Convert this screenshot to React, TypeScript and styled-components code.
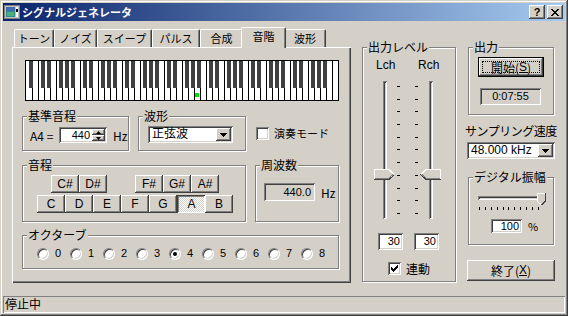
import React from "react";
import styled, { createGlobalStyle, css } from "styled-components";

const GlobalStyle = createGlobalStyle`
  * { box-sizing: border-box; }
  html, body { margin: 0; padding: 0; background: #d4d0c8; }
  body {
    font-family: "Noto Sans CJK JP", "Liberation Sans", sans-serif;
    font-size: 11px;
    line-height: 13px;
    color: #000;
  }
`;

const raised = css`
  background: #d4d0c8;
  box-shadow: inset -1px -1px #404040, inset 1px 1px #fff, inset -2px -2px #808080,
    inset 2px 2px #d4d0c8;
`;

const sunken = css`
  box-shadow: inset 1px 1px #808080, inset -1px -1px #fff, inset 2px 2px #404040,
    inset -2px -2px #d4d0c8;
`;

const Window = styled.div`
  width: 568px;
  height: 316px;
  padding: 3px;
  background: #d4d0c8;
  box-shadow: inset -1px -1px #404040, inset 1px 1px #d4d0c8, inset -2px -2px #808080,
    inset 2px 2px #fff;
  display: flex;
  flex-direction: column;
`;

const TitleBar = styled.div`
  height: 18px;
  padding: 0 2px 0 1px;
  display: flex;
  align-items: center;
  background: linear-gradient(to right, #0a246a, #a6caf0);
`;

const TitleText = styled.span`
  margin-left: 2px;
  flex: 1;
  color: #fff;
  font-weight: bold;
  font-size: 11px;
`;

const TitleButton = styled.div`
  ${raised};
  width: 16px;
  height: 14px;
  margin-left: 2px;
  display: flex;
  align-items: center;
  justify-content: center;
  font-family: "Liberation Sans", sans-serif;
  font-weight: bold;
  font-size: 11px;
`;

const MainRow = styled.div`
  height: 275px;
  padding: 6px 0 0 9px;
  display: flex;
  align-items: flex-start;
`;

const LeftCol = styled.div`
  width: 339px;
  display: flex;
  flex-direction: column;
`;

const TabStrip = styled.div`
  height: 20px;
  padding-left: 2px;
  display: flex;
  align-items: flex-end;
`;

const Tab = styled.div<{ $w: number; $active?: boolean }>`
  width: ${(p) => p.$w}px;
  height: 18px;
  background: #d4d0c8;
  border-top: 1px solid #fff;
  border-left: 1px solid #fff;
  border-right: 1px solid #404040;
  border-radius: 2px 2px 0 0;
  box-shadow: inset -1px 0 #808080;
  text-align: center;
  line-height: 16px;
  ${(p) =>
    p.$active &&
    css`
      width: ${p.$w + 4}px;
      height: 21px;
      margin: 0 -2px -1px;
      line-height: 17px;
      position: relative;
      z-index: 1;
    `}
`;

const Panel = styled.div`
  width: 339px;
  height: 236px;
  padding: 13px 0 0 10px;
  box-shadow: inset 1px 1px #fff, inset -1px -1px #404040, inset -2px -2px #808080;
`;

const KeyboardWrap = styled.div`
  margin-left: 3px;
  height: 41px;
`;

const Row = styled.div<{ $mt: number }>`
  display: flex;
  align-items: flex-start;
  margin-top: ${(p) => p.$mt}px;
`;

const Group = styled.div<{ $w: number; $h: number; $ml?: number; $pad: string }>`
  position: relative;
  width: ${(p) => p.$w}px;
  height: ${(p) => p.$h}px;
  margin-left: ${(p) => p.$ml ?? 0}px;
  padding: ${(p) => p.$pad};
  border: 1px solid #808080;
  box-shadow: inset 1px 1px #fff, 1px 1px #fff;
`;

const Legend = styled.span`
  position: absolute;
  top: -8px;
  left: 4px;
  padding: 0 1px;
  background: #d4d0c8;
  font-size: 12px;
  line-height: 14px;
`;

const Line = styled.div<{ $mt?: number; $ml?: number }>`
  display: flex;
  align-items: center;
  margin-top: ${(p) => p.$mt ?? 0}px;
  margin-left: ${(p) => p.$ml ?? 0}px;
`;

const Caption = styled.span<{ $w?: number; $ml?: number }>`
  display: inline-block;
  width: ${(p) => (p.$w ? `${p.$w}px` : "auto")};
  margin-left: ${(p) => p.$ml ?? 0}px;
  white-space: nowrap;
`;

const ChannelLabels = styled(Line)`
  font-family: "Liberation Sans", sans-serif;
  font-size: 12px;
  line-height: 14px;
`;

const Field = styled.div<{ $w: number; $h: number; $grey?: boolean; $align?: string }>`
  ${sunken};
  width: ${(p) => p.$w}px;
  height: ${(p) => p.$h}px;
  background: ${(p) => (p.$grey ? "#d4d0c8" : "#fff")};
  padding: 0 ${(p) => (p.$grey ? 4 : 3)}px;
  display: flex;
  align-items: center;
  justify-content: ${(p) => p.$align ?? "flex-end"};
  font-family: "Liberation Sans", "Noto Sans CJK JP", sans-serif;
  font-size: 11px;
  flex-shrink: 0;
`;

const SpinBox = styled.div`
  ${sunken};
  width: 48px;
  height: 16px;
  background: #fff;
  padding: 2px;
  display: flex;
  font-family: "Liberation Sans", sans-serif;
`;

const SpinValue = styled.div`
  flex: 1;
  text-align: right;
  padding-right: 2px;
  line-height: 12px;
`;

const SpinButtons = styled.div`
  width: 13px;
  display: flex;
  flex-direction: column;
`;

const SpinButton = styled.div`
  ${raised};
  flex: 1;
  display: flex;
  align-items: center;
  justify-content: center;
`;

const Combo = styled.div<{ $w: number }>`
  ${sunken};
  width: ${(p) => p.$w}px;
  height: 17px;
  background: #fff;
  padding: 2px;
  display: flex;
  align-items: center;
`;

const ComboText = styled.div`
  flex: 1;
  padding-left: 2px;
  font-family: "Liberation Sans", "Noto Sans CJK JP", sans-serif;
  font-size: 12px;
`;

const DropButton = styled.div`
  ${raised};
  width: 15px;
  height: 13px;
  display: flex;
  align-items: center;
  justify-content: center;
`;

const CheckBox = styled.div`
  ${sunken};
  width: 13px;
  height: 13px;
  background: #fff;
  display: flex;
  align-items: center;
  justify-content: center;
  flex-shrink: 0;
`;

const PitchRow = styled.div<{ $ml: number; $mt: number }>`
  display: flex;
  margin-left: ${(p) => p.$ml}px;
  margin-top: ${(p) => p.$mt}px;
`;

const PitchButton = styled.div<{ $pressed?: boolean; $ghost?: boolean }>`
  ${raised};
  width: 28px;
  height: 18px;
  display: flex;
  align-items: center;
  justify-content: center;
  font-family: "Liberation Sans", sans-serif;
  font-size: 12px;
  visibility: ${(p) => (p.$ghost ? "hidden" : "visible")};
  ${(p) =>
    p.$pressed &&
    css`
      background: repeating-conic-gradient(#fff 0 25%, #d4d0c8 0 50%) 0 0 / 2px 2px;
      box-shadow: inset 1px 1px #404040, inset -1px -1px #fff, inset 2px 2px #808080;
      padding: 1px 0 0 1px;
    `}
`;

const RadioItem = styled.div`
  width: 33px;
  display: flex;
  align-items: center;
`;

const RadioCircle = styled.div`
  width: 12px;
  height: 12px;
  border-radius: 50%;
  background: #fff;
  border: 1px solid;
  border-color: #808080 #fff #fff #808080;
  box-shadow: inset 1px 1px #404040, inset -1px -1px #d4d0c8;
  display: flex;
  align-items: center;
  justify-content: center;
`;

const RadioDot = styled.div`
  width: 4px;
  height: 4px;
  border-radius: 50%;
  background: #000;
`;

const RadioLabel = styled.span`
  margin-left: 6px;
  font-family: "Liberation Sans", sans-serif;
  font-size: 11px;
`;

const SideGroupWrap = styled.div<{ $ml: number }>`
  margin: 20px 0 0 ${(p) => p.$ml}px;
`;

const SliderRow = styled.div`
  height: 138px;
  margin-top: 9px;
  padding-left: 11px;
  display: flex;
`;

const VSlider = styled.div`
  position: relative;
  width: 21px;
  height: 100%;
  display: flex;
  justify-content: center;
`;

const VTrack = styled.div`
  width: 4px;
  height: 100%;
  box-shadow: inset 1px 1px #808080, inset -1px -1px #fff, inset 2px 2px #404040,
    inset -2px -2px #d4d0c8;
`;

const Thumb = styled.svg`
  position: absolute;
  left: 0;
  display: block;
`;

const TickCol = styled.div<{ $ml: number }>`
  width: 3px;
  height: 100%;
  margin-left: ${(p) => p.$ml}px;
  padding: 5px 0;
  display: flex;
  flex-direction: column;
  justify-content: space-between;
`;

const VTick = styled.div`
  width: 3px;
  height: 1px;
  background: #000;
`;

const RightCol = styled.div`
  width: 88px;
  margin: 20px 0 0 11px;
  display: flex;
  flex-direction: column;
`;

const PushButton = styled.div<{ $w: number; $h: number; $ml?: number; $mt?: number; $focus?: boolean }>`
  ${raised};
  position: relative;
  width: ${(p) => p.$w}px;
  height: ${(p) => p.$h}px;
  margin: ${(p) => p.$mt ?? 0}px 0 0 ${(p) => p.$ml ?? 0}px;
  display: flex;
  align-items: center;
  justify-content: center;
  font-size: 12px;
  ${(p) =>
    p.$focus &&
    css`
      box-shadow: inset 1px 1px #000, inset -1px -1px #000, inset -2px -2px #404040,
        inset 2px 2px #fff, inset -3px -3px #808080;
      &::after {
        content: "";
        position: absolute;
        inset: 4px;
        border: 1px dotted #000;
      }
    `}
`;

const Mnemonic = styled.span`
  text-decoration: underline;
  font-family: "Liberation Sans", sans-serif;
`;

const SideLabel = styled.div`
  margin: 9px 0 0 -2px;
  height: 13px;
  font-size: 12px;
  white-space: nowrap;
  letter-spacing: -0.5px;
`;

const HSlider = styled.div`
  position: relative;
  width: 64px;
  height: 17px;
  margin: 15px 0 0 9px;
  display: flex;
  flex-direction: column;
`;

const HTrack = styled.div`
  width: 62px;
  height: 4px;
  margin-top: 3px;
  box-shadow: inset 1px 1px #808080, inset -1px -1px #fff, inset 2px 2px #404040,
    inset -2px -2px #d4d0c8;
`;

const HTicks = styled.div`
  width: 62px;
  margin-top: 7px;
  padding: 0 1px;
  display: flex;
  justify-content: space-between;
`;

const HTick = styled.div`
  width: 1px;
  height: 3px;
  background: #000;
`;

const StatusBar = styled.div`
  height: 17px;
  margin-top: 0;
  padding-left: 2px;
  line-height: 16px;
  font-size: 12px;
  box-shadow: inset 1px 1px #808080, inset -1px -1px #fff;
`;

const Keyboard: React.FC<{ marked: number }> = ({ marked }) => {
  const names = ["A", "B", "C", "D", "E", "F", "G"];
  const whites = 52;
  const lines = [];
  const blacks = [];
  for (let i = 1; i < whites; i++) {
    lines.push(<rect key={`l${i}`} x={1 + i * 6} y={1} width={1} height={39} fill="#000" />);
  }
  for (let i = 0; i < whites - 1; i++) {
    const n = names[i % 7];
    if (n === "B" || n === "E") continue;
    const b = 1 + (i + 1) * 6;
    blacks.push(<rect key={`b${i}`} x={b - 3} y={1} width={4} height={27} fill="#404040" />);
  }
  return (
    <svg width={314} height={41} style={{ display: "block" }} shapeRendering="crispEdges">
      <rect x={0} y={0} width={314} height={41} fill="#000" />
      <rect x={1} y={1} width={312} height={39} fill="#fff" />
      {lines}
      {blacks}
      <rect x={2 + marked * 6} y={33} width={4} height={4} fill="#00e000" />
    </svg>
  );
};

const ThumbShape: React.FC<{ flip?: boolean; top: number }> = ({ flip, top }) => (
  <Thumb width={21} height={11} viewBox="0 0 21 11" style={{ top }} shapeRendering="crispEdges">
    <g transform={flip ? "translate(21 0) scale(-1 1)" : undefined}>
      <polygon points="0,0 15,0 20,5 20,6 15,11 0,11" fill="#d4d0c8" />
      <polyline points="0.5,10.5 0.5,0.5 15,0.5 19.5,5" fill="none" stroke="#fff" />
      <polyline points="0,10.5 15,10.5 20.5,5.5" fill="none" stroke="#404040" />
      <polyline points="1,9.5 14.5,9.5 19,5.5" fill="none" stroke="#808080" />
    </g>
  </Thumb>
);

const DownTriangle: React.FC = () => (
  <svg width={7} height={4} viewBox="0 0 7 4" shapeRendering="crispEdges">
    <polygon points="0,0 7,0 3.5,4" fill="#000" />
  </svg>
);

const SpinArrow: React.FC<{ up?: boolean }> = ({ up }) => (
  <svg width={5} height={3} viewBox="0 0 5 3">
    <polygon points={up ? "2.5,0 5,3 0,3" : "0,0 5,0 2.5,3"} fill="#000" />
  </svg>
);

const CheckMark: React.FC = () => (
  <svg width={9} height={9} viewBox="0 0 9 9" shapeRendering="crispEdges">
    <path
      d="M1 3h1v1h1v1h1V4h1V3h1V2h1V1h1v3H7v1H6v1H5v1H4v1H3V7H2V6H1z"
      fill="#000"
    />
  </svg>
);

const AppIcon: React.FC = () => (
  <svg width={16} height={16} viewBox="0 0 16 16" shapeRendering="crispEdges">
    <rect x={0} y={1} width={16} height={14} fill="#808080" />
    <rect x={1} y={2} width={14} height={12} fill="#c0c0c0" />
    <rect x={2} y={3} width={9} height={10} fill="#2e8b8b" />
    <rect x={2} y={3} width={9} height={4} fill="#3f6fb0" />
    <rect x={3} y={8} width={7} height={4} fill="#4caf7a" />
    <rect x={12} y={3} width={2} height={10} fill="#fff" />
    <rect x={12} y={5} width={2} height={3} fill="#000" />
  </svg>
);

const CloseGlyph: React.FC = () => (
  <svg width={8} height={7} viewBox="0 0 8 7" shapeRendering="crispEdges">
    <path d="M0 0h2v1h1v1h2V1h1V0h2v1H7v1H6v1H5v1h1v1h1v1h1v1H6V6H5V5H3v1H2v1H0V6h1V5h1V4h1V3H2V2H1V1H0z" fill="#000" />
  </svg>
);

const tabs = [
  { label: "トーン", w: 40 },
  { label: "ノイズ", w: 43 },
  { label: "スイープ", w: 55 },
  { label: "パルス", w: 48 },
  { label: "合成", w: 43 },
  { label: "音階", w: 41, active: true },
  { label: "波形", w: 42 },
];

const sharps = ["C#", "D#", "", "F#", "G#", "A#"];
const naturals = ["C", "D", "E", "F", "G", "A", "B"];
const octaves = [0, 1, 2, 3, 4, 5, 6, 7, 8];

const levelTop = (v: number) => Math.round(5 + ((100 - v) / 100) * 127 - 6);

export default function App() {
  const level = 30;
  return (
    <>
      <GlobalStyle />
      <Window>
        <TitleBar>
          <AppIcon />
          <TitleText>シグナルジェネレータ</TitleText>
          <TitleButton>?</TitleButton>
          <TitleButton>
            <CloseGlyph />
          </TitleButton>
        </TitleBar>

        <MainRow>
          <LeftCol>
            <TabStrip>
              {tabs.map((t) => (
                <Tab key={t.label} $w={t.w} $active={t.active}>
                  {t.label}
                </Tab>
              ))}
            </TabStrip>
            <Panel>
              <KeyboardWrap>
                <Keyboard marked={28} />
              </KeyboardWrap>

              <Row $mt={15}>
                <Group $w={107} $h={35} $pad="10px 0 0 7px">
                  <Legend>基準音程</Legend>
                  <Line>
                    <Caption $w={29} style={{ fontSize: 12 }}>
                      A4 =
                    </Caption>
                    <SpinBox>
                      <SpinValue>440</SpinValue>
                      <SpinButtons>
                        <SpinButton>
                          <SpinArrow up />
                        </SpinButton>
                        <SpinButton>
                          <SpinArrow />
                        </SpinButton>
                      </SpinButtons>
                    </SpinBox>
                    <Caption $ml={6} style={{ fontSize: 12 }}>
                      Hz
                    </Caption>
                  </Line>
                </Group>
                <Group $w={108} $h={35} $ml={9} $pad="9px 0 0 9px">
                  <Legend>波形</Legend>
                  <Combo $w={85}>
                    <ComboText>正弦波</ComboText>
                    <DropButton>
                      <DownTriangle />
                    </DropButton>
                  </Combo>
                </Group>
                <Line $mt={11} $ml={10}>
                  <CheckBox />
                  <Caption $ml={5}>演奏モード</Caption>
                </Line>
              </Row>

              <Row $mt={14}>
                <Group $w={224} $h={57} $pad="0">
                  <Legend>音程</Legend>
                  <PitchRow $ml={28} $mt={9}>
                    {sharps.map((s, i) => (
                      <PitchButton key={i} $ghost={!s}>
                        {s}
                      </PitchButton>
                    ))}
                  </PitchRow>
                  <PitchRow $ml={14} $mt={2}>
                    {naturals.map((n) => (
                      <PitchButton key={n} $pressed={n === "A"}>
                        {n}
                      </PitchButton>
                    ))}
                  </PitchRow>
                </Group>
                <Group $w={84} $h={57} $ml={9} $pad="17px 0 0 8px">
                  <Legend>周波数</Legend>
                  <Line>
                    <Field $w={51} $h={18} $grey>
                      440.0
                    </Field>
                    <Caption $ml={6} style={{ fontSize: 12 }}>
                      Hz
                    </Caption>
                  </Line>
                </Group>
              </Row>

              <Row $mt={13}>
                <Group $w={317} $h={34} $pad="11px 0 0 14px">
                  <Legend>オクターブ</Legend>
                  <Line>
                    {octaves.map((o) => (
                      <RadioItem key={o}>
                        <RadioCircle>{o === 4 && <RadioDot />}</RadioCircle>
                        <RadioLabel>{o}</RadioLabel>
                      </RadioItem>
                    ))}
                  </Line>
                </Group>
              </Row>
            </Panel>
          </LeftCol>

          <SideGroupWrap $ml={11}>
            <Group $w={94} $h={235} $pad="10px 0 0 0">
              <Legend>出力レベル</Legend>
              <ChannelLabels $ml={13}>
                <Caption $w={42}>Lch</Caption>
                <Caption>Rch</Caption>
              </ChannelLabels>
              <SliderRow>
                <VSlider>
                  <VTrack />
                  <ThumbShape top={levelTop(level)} />
                </VSlider>
                <TickCol $ml={2}>
                  {Array.from({ length: 11 }, (_, i) => (
                    <VTick key={i} />
                  ))}
                </TickCol>
                <TickCol $ml={15}>
                  {Array.from({ length: 11 }, (_, i) => (
                    <VTick key={i} />
                  ))}
                </TickCol>
                <VSlider style={{ marginLeft: 2 }}>
                  <VTrack />
                  <ThumbShape flip top={levelTop(level)} />
                </VSlider>
              </SliderRow>
              <Line $mt={14} $ml={15}>
                <Field $w={25} $h={17}>
                  30
                </Field>
                <Field $w={25} $h={17} style={{ marginLeft: 11 }}>
                  30
                </Field>
              </Line>
              <Line $mt={12} $ml={25}>
                <CheckBox>
                  <CheckMark />
                </CheckBox>
                <Caption $ml={5} style={{ fontSize: 12 }}>
                  連動
                </Caption>
              </Line>
            </Group>
          </SideGroupWrap>

          <RightCol>
            <Group $w={86} $h={68} $ml={1} $pad="9px 0 0 9px">
              <Legend>出力</Legend>
              <PushButton $w={66} $h={20} $focus>
                開始(<Mnemonic>S</Mnemonic>)
              </PushButton>
              <Field $w={61} $h={17} $grey $align="center" style={{ marginTop: 11, marginLeft: 2 }}>
                0:07:55
              </Field>
            </Group>
            <SideLabel>サンプリング速度</SideLabel>
            <Combo $w={88} style={{ marginTop: 5 }}>
              <ComboText>48.000 kHz</ComboText>
              <DropButton>
                <DownTriangle />
              </DropButton>
            </Combo>
            <Group $w={86} $h={68} $ml={1} $pad="0" style={{ marginTop: 18 }}>
              <Legend>デジタル振幅</Legend>
              <HSlider>
                <HTrack />
                <HTicks>
                  {Array.from({ length: 11 }, (_, i) => (
                    <HTick key={i} />
                  ))}
                </HTicks>
                <svg
                  width={9}
                  height={12}
                  viewBox="0 0 9 12"
                  shapeRendering="crispEdges"
                  style={{ position: "absolute", left: 59, top: 0 }}
                >
                  <polygon points="0,0 8,0 8,8 4,12 0,8" fill="#d4d0c8" />
                  <polyline points="0.5,8 0.5,0.5 8,0.5" fill="none" stroke="#fff" />
                  <polyline points="8.5,0 8.5,8 4.5,12" fill="none" stroke="#404040" />
                  <polyline points="0.5,8.5 4,11.5" fill="none" stroke="#fff" />
                </svg>
              </HSlider>
              <Line $mt={9} $ml={22}>
                <Field $w={31} $h={14}>
                  100
                </Field>
                <Caption $ml={6}>%</Caption>
              </Line>
            </Group>
            <PushButton $w={88} $h={21} $mt={15}>
              終了(<Mnemonic>X</Mnemonic>)
            </PushButton>
          </RightCol>
        </MainRow>

        <StatusBar>停止中</StatusBar>
      </Window>
    </>
  );
}
